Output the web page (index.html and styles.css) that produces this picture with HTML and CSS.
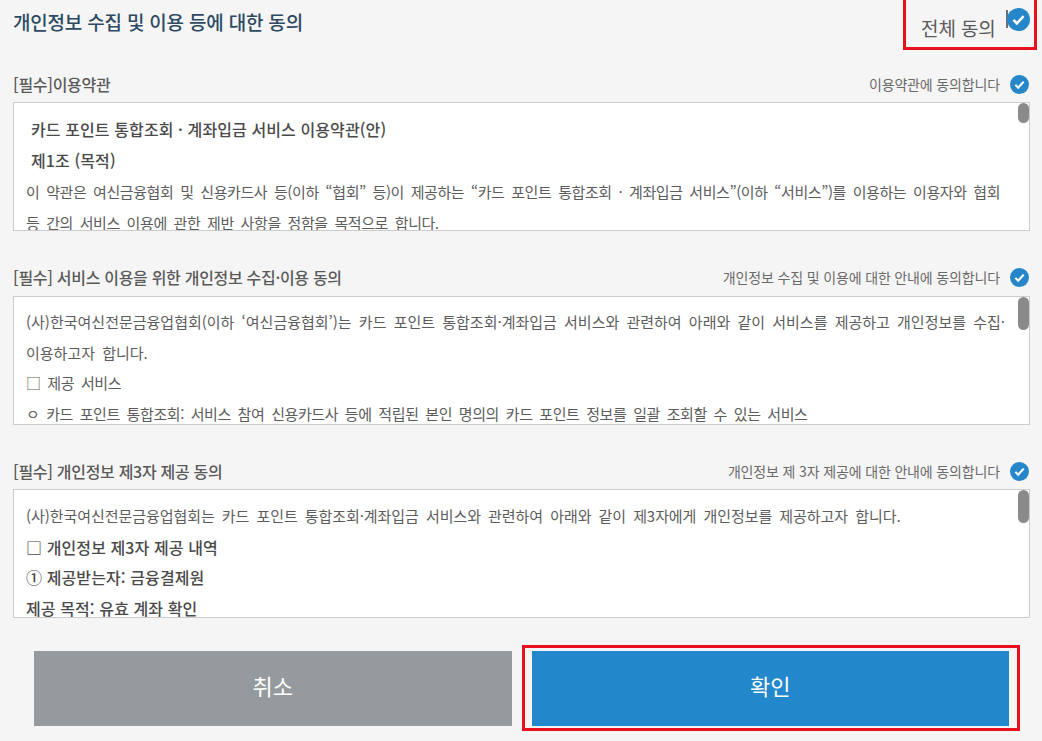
FILE: index.html
```html
<!DOCTYPE html>
<html lang="ko">
<head>
    <meta charset="UTF-8">
    <meta name="viewport" content="width=device-width, initial-scale=1.0">
    <title>개인정보 수집 및 이용 등에 대한 동의</title>
    <link rel="stylesheet" href="styles.css">
</head>
<body>
    <svg class="icon-defs" width="0" height="0">
        <symbol id="check" viewBox="0 0 20 20">
            <circle cx="10" cy="10" r="10" fill="#2587c9"/>
            <path d="M5.6 10.4l3 3 5.8-6.4" fill="none" stroke="#fff" stroke-width="2.2"/>
        </symbol>
    </svg>

    <div class="agree">
        <div class="agree-head">
            <h1>개인정보 수집 및 이용 등에 대한 동의</h1>
            <div class="agree-all">
                <span>전체 동의</span>
                <i class="all-bar"></i>
                <svg class="all-check"><use href="#check"/></svg>
            </div>
        </div>

        <div class="section section-first">
            <div class="section-head">
                <h2>[필수]이용약관</h2>
                <div class="section-agree">
                    <span>이용약관에 동의합니다</span>
                    <svg class="check"><use href="#check"/></svg>
                </div>
            </div>
            <div class="terms terms-first">
                <p class="strong indent">카드 포인트 통합조회 · 계좌입금 서비스 이용약관(안)</p>
                <p class="strong indent">제1조 (목적)</p>
                <p>이 약관은 여신금융협회 및 신용카드사 등(이하 “협회” 등)이 제공하는 “카드 포인트 통합조회 · 계좌입금 서비스”(이하 “서비스”)를 이용하는 이용자와 협회</p>
                <p>등 간의 서비스 이용에 관한 제반 사항을 정함을 목적으로 합니다.</p>
                <div class="thumb"></div>
            </div>
        </div>

        <div class="section">
            <div class="section-head">
                <h2>[필수] 서비스 이용을 위한 개인정보 수집·이용 동의</h2>
                <div class="section-agree">
                    <span>개인정보 수집 및 이용에 대한 안내에 동의합니다</span>
                    <svg class="check"><use href="#check"/></svg>
                </div>
            </div>
            <div class="terms terms-small">
                <p class="small">(사)한국여신전문금융업협회(이하 ‘여신금융협회’)는 카드 포인트 통합조회·계좌입금 서비스와 관련하여 아래와 같이 서비스를 제공하고 개인정보를 수집·</p>
                <p class="small">이용하고자 합니다.</p>
                <p>□ 제공 서비스</p>
                <p>ㅇ 카드 포인트 통합조회: 서비스 참여 신용카드사 등에 적립된 본인 명의의 카드 포인트 정보를 일괄 조회할 수 있는 서비스</p>
                <div class="thumb"></div>
            </div>
        </div>

        <div class="section section-last">
            <div class="section-head">
                <h2>[필수] 개인정보 제3자 제공 동의</h2>
                <div class="section-agree">
                    <span>개인정보 제 3자 제공에 대한 안내에 동의합니다</span>
                    <svg class="check"><use href="#check"/></svg>
                </div>
            </div>
            <div class="terms terms-small">
                <p class="small">(사)한국여신전문금융업협회는 카드 포인트 통합조회·계좌입금 서비스와 관련하여 아래와 같이 제3자에게 개인정보를 제공하고자 합니다.</p>
                <p class="strong">□ 개인정보 제3자 제공 내역</p>
                <p class="strong">① 제공받는자: 금융결제원</p>
                <p class="strong">제공 목적: 유효 계좌 확인</p>
                <div class="thumb"></div>
            </div>
        </div>

        <div class="buttons">
            <button class="btn-cancel">취소</button>
            <button class="btn-ok">확인</button>
        </div>
    </div>
</body>
</html>
```

FILE: styles.css
```css
* {
    box-sizing: border-box;
}
html, body {
    height: 741px;
    overflow: hidden;
}
body {
    margin: 0;
    background-color: #f5f5f5;
    color: #4a4a4a;
    font-family: "Noto Sans CJK KR", "Noto Sans", sans-serif;
}
.icon-defs {
    position: absolute;
}
.agree {
    padding: 0 12px 0 13px;
}
.agree-head {
    position: relative;
    height: 48px;
}
.agree-head h1 {
    margin: 0;
    padding-top: 8px;
    font-size: 19px;
    font-weight: 500;
    line-height: 27px;
    letter-spacing: -0.2px;
    color: #2e4a63;
}
.agree-all {
    position: absolute;
    top: -3px;
    right: -7px;
    width: 134px;
    height: 53px;
    border: 3px solid #e8101c;
}
.agree-all span {
    position: absolute;
    left: 15px;
    top: 14px;
    font-size: 19px;
    line-height: 27px;
    letter-spacing: -0.1px;
    color: #5a5a5a;
}
.all-bar {
    position: absolute;
    left: 100px;
    top: 10px;
    width: 2px;
    height: 18px;
    background-color: #6a6f75;
}
.all-check {
    position: absolute;
    left: 101px;
    top: 8px;
    width: 23px;
    height: 23px;
}
.section {
    margin-top: 36px;
}
.section-first {
    margin-top: 26px;
}
.section-head {
    display: flex;
    justify-content: space-between;
    align-items: center;
    height: 20px;
    margin-bottom: 9px;
    padding-right: 1px;
}
.section-first .section-head,
.section-last .section-head {
    margin-bottom: 8px;
}
.section-head h2 {
    margin: 0;
    font-size: 16px;
    font-weight: 500;
    letter-spacing: -0.3px;
    color: #5a5a5a;
}
.section-agree {
    display: flex;
    align-items: center;
    gap: 10px;
    font-size: 14px;
    letter-spacing: -0.15px;
    color: #6a6a6a;
}
.check {
    width: 19px;
    height: 19px;
}
.terms {
    position: relative;
    height: 129px;
    padding: 11px 12px 0;
    overflow: hidden;
    background-color: #fff;
    border: 1px solid #ccc;
    font-size: 15px;
    letter-spacing: -0.42px;
    word-spacing: 3px;
    color: #5c5c5c;
}
.terms p {
    margin: 0;
    height: 30.5px;
    line-height: 30.5px;
    white-space: nowrap;
}
.terms-first p {
    height: 31px;
    line-height: 31px;
}
.terms-small {
    padding-top: 10px;
}
.section-last .terms-small {
    padding-top: 11px;
}
.terms .strong {
    font-size: 16px;
    font-weight: 500;
    letter-spacing: 0.1px;
    word-spacing: 0;
    color: #4a4a4a;
}
.terms .indent {
    padding-left: 5px;
}
.terms .small {
    letter-spacing: 0;
}
.section-last .terms .small {
    letter-spacing: -0.06px;
}
.thumb {
    position: absolute;
    top: 0;
    right: 0;
    width: 11px;
    height: 20px;
    background-color: #8a8a8a;
    border-radius: 6px;
}
.terms-small .thumb {
    height: 33px;
}
.buttons {
    display: flex;
    gap: 20px;
    margin-top: 33px;
    padding: 0 21px;
}
.buttons button {
    position: relative;
    flex: 1;
    height: 75px;
    padding-bottom: 8px;
    border: 0;
    font-family: inherit;
    font-size: 22px;
    color: #fff;
}
.btn-cancel {
    background-color: #949a9e;
}
.btn-ok {
    background-color: #2287cb;
}
.btn-ok::after {
    content: "";
    position: absolute;
    inset: -6px -11px -5px -10px;
    border: 3px solid #e8101c;
}
```
